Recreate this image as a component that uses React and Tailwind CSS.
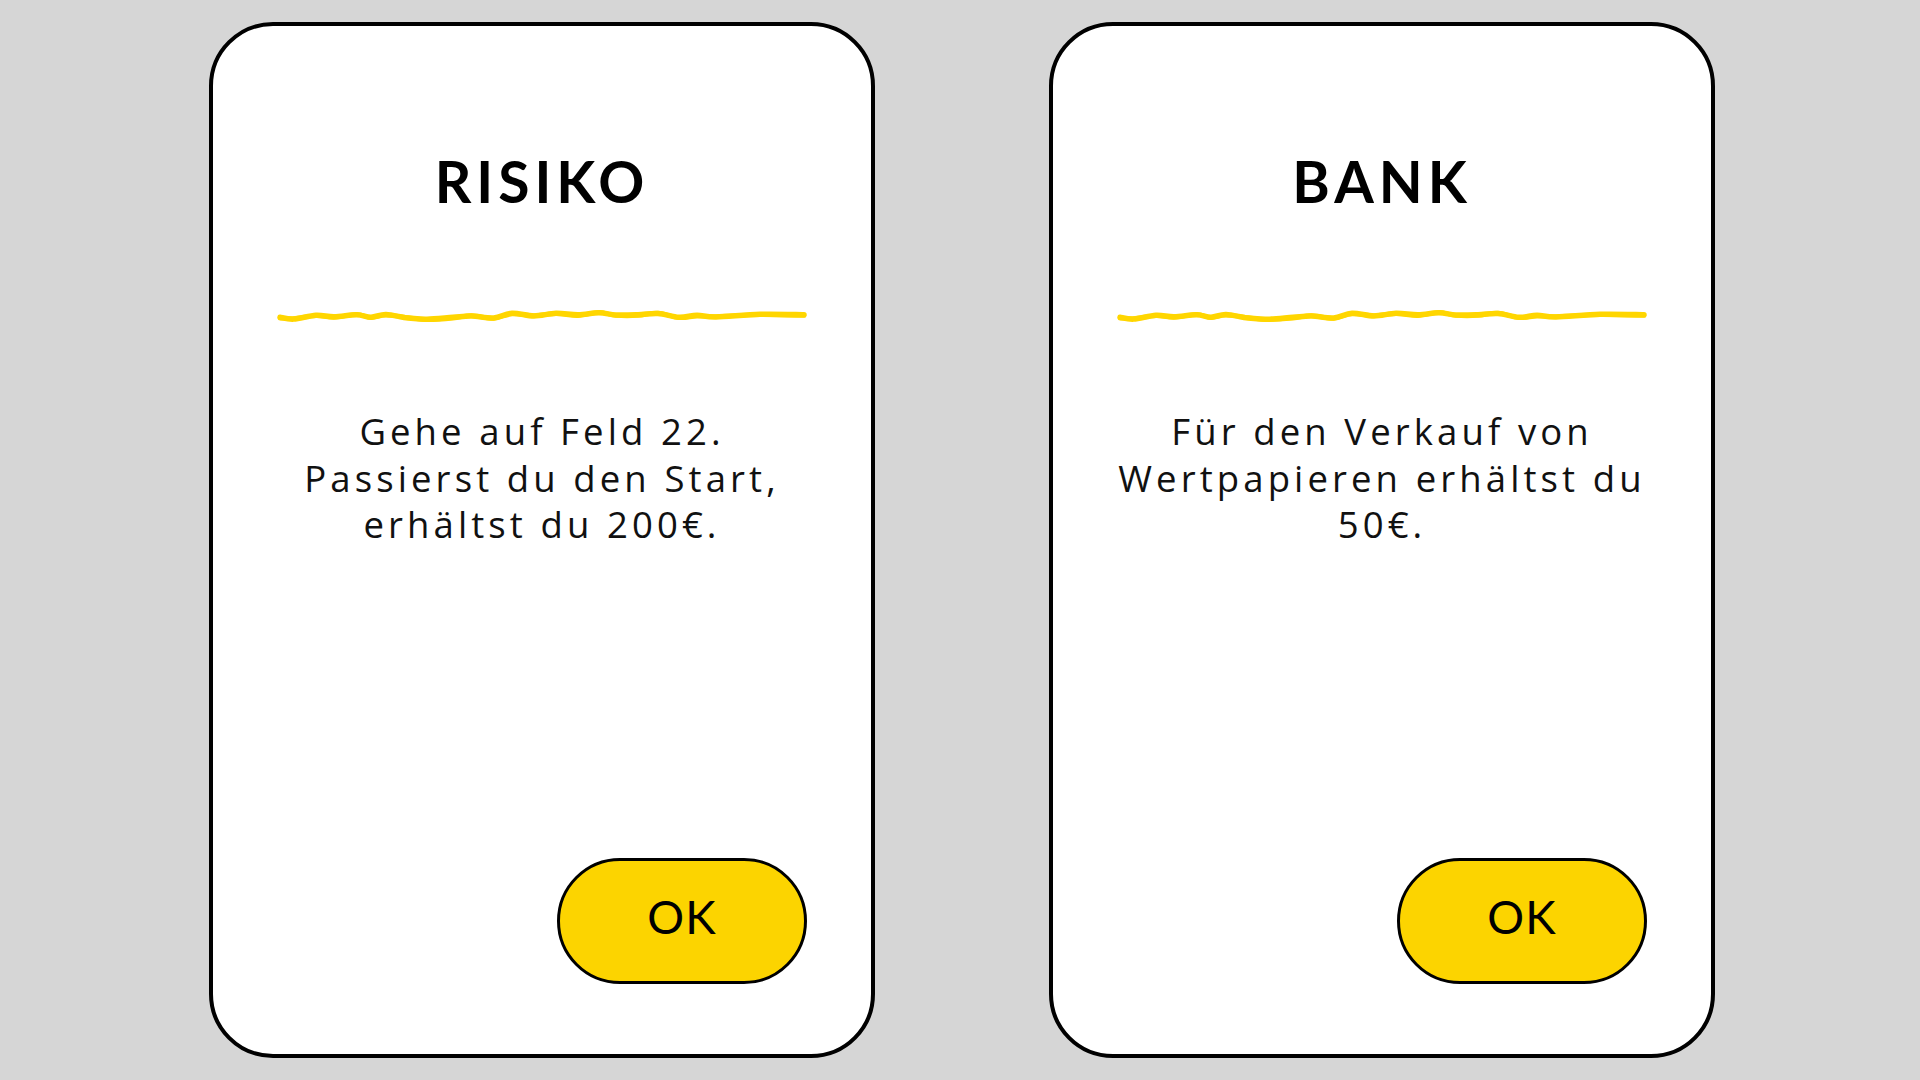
import React from "react";

const RAW = [
  [3, 9.3], [16.7, 11.1], [38.9, 7.2], [57, 8.7], [79.6, 6.8], [94, 9.2], [109, 6.4],
  [131, 10.1], [150, 11.2], [176, 9.3], [194.5, 8.1], [216.7, 9.9], [235, 5.2], [257, 8],
  [279, 5.2], [301, 6.8], [322, 4.8], [339, 7], [361, 6.7], [381, 5.5], [402, 9.3],
  [420, 7.3], [439, 9], [483, 6.3], [527, 6.7],
];

function smoothPath(p) {
  let d = `M${p[0][0]},${p[0][1]}`;
  for (let i = 0; i < p.length - 1; i++) {
    const p0 = p[i - 1] || p[i];
    const p1 = p[i];
    const p2 = p[i + 1];
    const p3 = p[i + 2] || p2;
    const c1x = p1[0] + (p2[0] - p0[0]) / 6;
    const c1y = p1[1] + (p2[1] - p0[1]) / 6;
    const c2x = p2[0] - (p3[0] - p1[0]) / 6;
    const c2y = p2[1] - (p3[1] - p1[1]) / 6;
    d += ` C${c1x.toFixed(2)},${c1y.toFixed(2)} ${c2x.toFixed(2)},${c2y.toFixed(2)} ${p2[0]},${p2[1]}`;
  }
  return d;
}

const WAVE = smoothPath(RAW);
const WAVE2 = smoothPath(RAW.map(([x, y], i) => [x, y + (i % 3 === 0 ? 0.9 : i % 3 === 1 ? -0.6 : 0.5)]));

function Wave() {
  return (
    <svg width="530" height="16" viewBox="0 0 530 16" className="block">
      <path d={WAVE} fill="none" stroke="#FFD600" strokeWidth="5.5" strokeLinecap="round" strokeLinejoin="round" />
      <path d={WAVE2} fill="none" stroke="#FFD600" strokeWidth="4.5" strokeLinecap="round" strokeLinejoin="round" />
    </svg>
  );
}

function Card({ title, lines }) {
  return (
    <div className="w-[666px] h-[1036px] bg-white border-[4px] border-black rounded-[64px] flex flex-col items-center px-16 pt-[127px] pb-[70px]">
      <h1 className="text-[57px] leading-[57px] font-bold tracking-[5px] text-black text-center">{title}</h1>
      <div className="mt-[98px]">
        <Wave />
      </div>
      <p
        className="mt-[84px] text-[36.5px] leading-[46.5px] tracking-[4.1px] text-[#111] text-center"
        style={{ fontFamily: "'Open Sans', Lato, sans-serif" }}
      >
        {lines.map((l, i) => (
          <span key={i} className="block whitespace-nowrap">{l}</span>
        ))}
      </p>
      <div className="flex-1" />
      <button className="self-end w-[250px] h-[126px] rounded-full border-[3px] border-black bg-[#FCD400] text-[46px] leading-none text-black tracking-[1px] pb-[9px]">
        OK
      </button>
    </div>
  );
}

export default function App() {
  return (
    <div
      className="w-full h-screen bg-[#d6d6d6] flex items-center justify-center gap-[174px] pl-[4px]"
      style={{ fontFamily: "Lato, 'Noto Sans', sans-serif" }}
    >
      <Card title="RISIKO" lines={["Gehe auf Feld 22.", "Passierst du den Start,", "erhältst du 200€."]} />
      <Card title="BANK" lines={["Für den Verkauf von", "Wertpapieren erhältst du", "50€."]} />
    </div>
  );
}
